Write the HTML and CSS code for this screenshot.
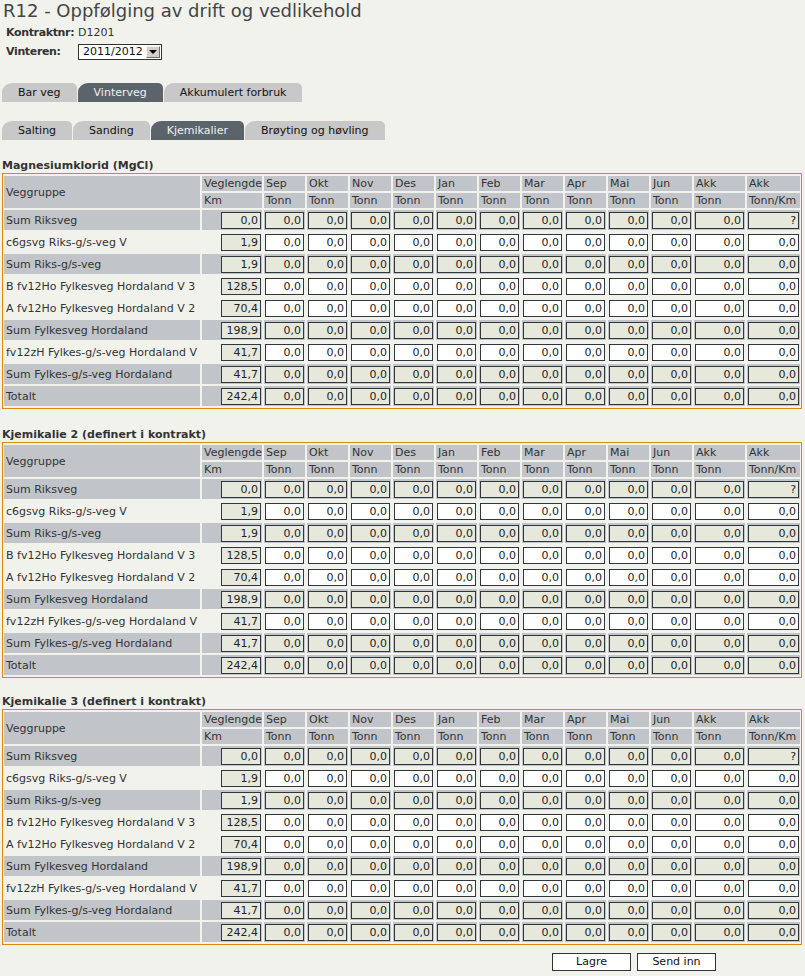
FILE: index.html
```html
<!DOCTYPE html>
<html lang="no">
<head>
<meta charset="utf-8">
<title>R12 - Oppfølging av drift og vedlikehold</title>
<link rel="stylesheet" href="styles.css">
</head>
<body>
<h1>R12 - Oppfølging av drift og vedlikehold</h1>
<div class="info">
  <span class="lbl">Kontraktnr:</span><span>D1201</span>
  <span class="lbl">Vinteren:</span>
  <div class="select"><span class="val">2011/2012</span><span class="arrow"><span class="tri"></span></span></div>
</div>

<div class="tabs tabs1">
  <span class="tab">Bar veg</span>
  <span class="tab active">Vinterveg</span>
  <span class="tab">Akkumulert forbruk</span>
</div>
<div class="tabs tabs2">
  <span class="tab">Salting</span>
  <span class="tab">Sanding</span>
  <span class="tab active">Kjemikalier</span>
  <span class="tab">Brøyting og høvling</span>
</div>

<h2 class="sect">Magnesiumklorid (MgCl)</h2>
<div class="wrap">
<table class="grid">
<colgroup><col class="c-name"><col class="c-km"><col class="c-m"><col class="c-m"><col class="c-m"><col class="c-m"><col class="c-m"><col class="c-m"><col class="c-m"><col class="c-m"><col class="c-m"><col class="c-m"><col class="c-akk"><col class="c-akk2"></colgroup>
<thead>
<tr><th rowspan="2" class="vg">Veggruppe</th><th>Veglengde</th><th>Sep</th><th>Okt</th><th>Nov</th><th>Des</th><th>Jan</th><th>Feb</th><th>Mar</th><th>Apr</th><th>Mai</th><th>Jun</th><th>Akk</th><th>Akk</th></tr>
<tr><th>Km</th><th>Tonn</th><th>Tonn</th><th>Tonn</th><th>Tonn</th><th>Tonn</th><th>Tonn</th><th>Tonn</th><th>Tonn</th><th>Tonn</th><th>Tonn</th><th>Tonn</th><th>Tonn/Km</th></tr>
</thead>
<tbody>
<tr class="sum"><td class="nm">Sum Riksveg</td><td><span class="box ro km">0,0</span></td><td><span class="box ro">0,0</span></td><td><span class="box ro">0,0</span></td><td><span class="box ro">0,0</span></td><td><span class="box ro">0,0</span></td><td><span class="box ro">0,0</span></td><td><span class="box ro">0,0</span></td><td><span class="box ro">0,0</span></td><td><span class="box ro">0,0</span></td><td><span class="box ro">0,0</span></td><td><span class="box ro">0,0</span></td><td><span class="box ro">0,0</span></td><td><span class="box ro">?</span></td></tr>
<tr><td class="nm">c6gsvg Riks-g/s-veg V</td><td><span class="box ro km">1,9</span></td><td><span class="box">0,0</span></td><td><span class="box">0,0</span></td><td><span class="box">0,0</span></td><td><span class="box">0,0</span></td><td><span class="box">0,0</span></td><td><span class="box">0,0</span></td><td><span class="box">0,0</span></td><td><span class="box">0,0</span></td><td><span class="box">0,0</span></td><td><span class="box">0,0</span></td><td><span class="box">0,0</span></td><td><span class="box">0,0</span></td></tr>
<tr class="sum"><td class="nm">Sum Riks-g/s-veg</td><td><span class="box ro km">1,9</span></td><td><span class="box ro">0,0</span></td><td><span class="box ro">0,0</span></td><td><span class="box ro">0,0</span></td><td><span class="box ro">0,0</span></td><td><span class="box ro">0,0</span></td><td><span class="box ro">0,0</span></td><td><span class="box ro">0,0</span></td><td><span class="box ro">0,0</span></td><td><span class="box ro">0,0</span></td><td><span class="box ro">0,0</span></td><td><span class="box ro">0,0</span></td><td><span class="box ro">0,0</span></td></tr>
<tr><td class="nm">B fv12Ho Fylkesveg Hordaland V 3</td><td><span class="box ro km">128,5</span></td><td><span class="box">0,0</span></td><td><span class="box">0,0</span></td><td><span class="box">0,0</span></td><td><span class="box">0,0</span></td><td><span class="box">0,0</span></td><td><span class="box">0,0</span></td><td><span class="box">0,0</span></td><td><span class="box">0,0</span></td><td><span class="box">0,0</span></td><td><span class="box">0,0</span></td><td><span class="box">0,0</span></td><td><span class="box">0,0</span></td></tr>
<tr><td class="nm">A fv12Ho Fylkesveg Hordaland V 2</td><td><span class="box ro km">70,4</span></td><td><span class="box">0,0</span></td><td><span class="box">0,0</span></td><td><span class="box">0,0</span></td><td><span class="box">0,0</span></td><td><span class="box">0,0</span></td><td><span class="box">0,0</span></td><td><span class="box">0,0</span></td><td><span class="box">0,0</span></td><td><span class="box">0,0</span></td><td><span class="box">0,0</span></td><td><span class="box">0,0</span></td><td><span class="box">0,0</span></td></tr>
<tr class="sum"><td class="nm">Sum Fylkesveg Hordaland</td><td><span class="box ro km">198,9</span></td><td><span class="box ro">0,0</span></td><td><span class="box ro">0,0</span></td><td><span class="box ro">0,0</span></td><td><span class="box ro">0,0</span></td><td><span class="box ro">0,0</span></td><td><span class="box ro">0,0</span></td><td><span class="box ro">0,0</span></td><td><span class="box ro">0,0</span></td><td><span class="box ro">0,0</span></td><td><span class="box ro">0,0</span></td><td><span class="box ro">0,0</span></td><td><span class="box ro">0,0</span></td></tr>
<tr><td class="nm">fv12zH Fylkes-g/s-veg Hordaland V</td><td><span class="box ro km">41,7</span></td><td><span class="box">0,0</span></td><td><span class="box">0,0</span></td><td><span class="box">0,0</span></td><td><span class="box">0,0</span></td><td><span class="box">0,0</span></td><td><span class="box">0,0</span></td><td><span class="box">0,0</span></td><td><span class="box">0,0</span></td><td><span class="box">0,0</span></td><td><span class="box">0,0</span></td><td><span class="box">0,0</span></td><td><span class="box">0,0</span></td></tr>
<tr class="sum"><td class="nm">Sum Fylkes-g/s-veg Hordaland</td><td><span class="box ro km">41,7</span></td><td><span class="box ro">0,0</span></td><td><span class="box ro">0,0</span></td><td><span class="box ro">0,0</span></td><td><span class="box ro">0,0</span></td><td><span class="box ro">0,0</span></td><td><span class="box ro">0,0</span></td><td><span class="box ro">0,0</span></td><td><span class="box ro">0,0</span></td><td><span class="box ro">0,0</span></td><td><span class="box ro">0,0</span></td><td><span class="box ro">0,0</span></td><td><span class="box ro">0,0</span></td></tr>
<tr class="sum"><td class="nm">Totalt</td><td><span class="box ro km">242,4</span></td><td><span class="box ro">0,0</span></td><td><span class="box ro">0,0</span></td><td><span class="box ro">0,0</span></td><td><span class="box ro">0,0</span></td><td><span class="box ro">0,0</span></td><td><span class="box ro">0,0</span></td><td><span class="box ro">0,0</span></td><td><span class="box ro">0,0</span></td><td><span class="box ro">0,0</span></td><td><span class="box ro">0,0</span></td><td><span class="box ro">0,0</span></td><td><span class="box ro">0,0</span></td></tr>
</tbody>
</table>
</div>

<h2 class="sect">Kjemikalie 2 (definert i kontrakt)</h2>
<div class="wrap">
<table class="grid">
<colgroup><col class="c-name"><col class="c-km"><col class="c-m"><col class="c-m"><col class="c-m"><col class="c-m"><col class="c-m"><col class="c-m"><col class="c-m"><col class="c-m"><col class="c-m"><col class="c-m"><col class="c-akk"><col class="c-akk2"></colgroup>
<thead>
<tr><th rowspan="2" class="vg">Veggruppe</th><th>Veglengde</th><th>Sep</th><th>Okt</th><th>Nov</th><th>Des</th><th>Jan</th><th>Feb</th><th>Mar</th><th>Apr</th><th>Mai</th><th>Jun</th><th>Akk</th><th>Akk</th></tr>
<tr><th>Km</th><th>Tonn</th><th>Tonn</th><th>Tonn</th><th>Tonn</th><th>Tonn</th><th>Tonn</th><th>Tonn</th><th>Tonn</th><th>Tonn</th><th>Tonn</th><th>Tonn</th><th>Tonn/Km</th></tr>
</thead>
<tbody>
<tr class="sum"><td class="nm">Sum Riksveg</td><td><span class="box ro km">0,0</span></td><td><span class="box ro">0,0</span></td><td><span class="box ro">0,0</span></td><td><span class="box ro">0,0</span></td><td><span class="box ro">0,0</span></td><td><span class="box ro">0,0</span></td><td><span class="box ro">0,0</span></td><td><span class="box ro">0,0</span></td><td><span class="box ro">0,0</span></td><td><span class="box ro">0,0</span></td><td><span class="box ro">0,0</span></td><td><span class="box ro">0,0</span></td><td><span class="box ro">?</span></td></tr>
<tr><td class="nm">c6gsvg Riks-g/s-veg V</td><td><span class="box ro km">1,9</span></td><td><span class="box">0,0</span></td><td><span class="box">0,0</span></td><td><span class="box">0,0</span></td><td><span class="box">0,0</span></td><td><span class="box">0,0</span></td><td><span class="box">0,0</span></td><td><span class="box">0,0</span></td><td><span class="box">0,0</span></td><td><span class="box">0,0</span></td><td><span class="box">0,0</span></td><td><span class="box">0,0</span></td><td><span class="box">0,0</span></td></tr>
<tr class="sum"><td class="nm">Sum Riks-g/s-veg</td><td><span class="box ro km">1,9</span></td><td><span class="box ro">0,0</span></td><td><span class="box ro">0,0</span></td><td><span class="box ro">0,0</span></td><td><span class="box ro">0,0</span></td><td><span class="box ro">0,0</span></td><td><span class="box ro">0,0</span></td><td><span class="box ro">0,0</span></td><td><span class="box ro">0,0</span></td><td><span class="box ro">0,0</span></td><td><span class="box ro">0,0</span></td><td><span class="box ro">0,0</span></td><td><span class="box ro">0,0</span></td></tr>
<tr><td class="nm">B fv12Ho Fylkesveg Hordaland V 3</td><td><span class="box ro km">128,5</span></td><td><span class="box">0,0</span></td><td><span class="box">0,0</span></td><td><span class="box">0,0</span></td><td><span class="box">0,0</span></td><td><span class="box">0,0</span></td><td><span class="box">0,0</span></td><td><span class="box">0,0</span></td><td><span class="box">0,0</span></td><td><span class="box">0,0</span></td><td><span class="box">0,0</span></td><td><span class="box">0,0</span></td><td><span class="box">0,0</span></td></tr>
<tr><td class="nm">A fv12Ho Fylkesveg Hordaland V 2</td><td><span class="box ro km">70,4</span></td><td><span class="box">0,0</span></td><td><span class="box">0,0</span></td><td><span class="box">0,0</span></td><td><span class="box">0,0</span></td><td><span class="box">0,0</span></td><td><span class="box">0,0</span></td><td><span class="box">0,0</span></td><td><span class="box">0,0</span></td><td><span class="box">0,0</span></td><td><span class="box">0,0</span></td><td><span class="box">0,0</span></td><td><span class="box">0,0</span></td></tr>
<tr class="sum"><td class="nm">Sum Fylkesveg Hordaland</td><td><span class="box ro km">198,9</span></td><td><span class="box ro">0,0</span></td><td><span class="box ro">0,0</span></td><td><span class="box ro">0,0</span></td><td><span class="box ro">0,0</span></td><td><span class="box ro">0,0</span></td><td><span class="box ro">0,0</span></td><td><span class="box ro">0,0</span></td><td><span class="box ro">0,0</span></td><td><span class="box ro">0,0</span></td><td><span class="box ro">0,0</span></td><td><span class="box ro">0,0</span></td><td><span class="box ro">0,0</span></td></tr>
<tr><td class="nm">fv12zH Fylkes-g/s-veg Hordaland V</td><td><span class="box ro km">41,7</span></td><td><span class="box">0,0</span></td><td><span class="box">0,0</span></td><td><span class="box">0,0</span></td><td><span class="box">0,0</span></td><td><span class="box">0,0</span></td><td><span class="box">0,0</span></td><td><span class="box">0,0</span></td><td><span class="box">0,0</span></td><td><span class="box">0,0</span></td><td><span class="box">0,0</span></td><td><span class="box">0,0</span></td><td><span class="box">0,0</span></td></tr>
<tr class="sum"><td class="nm">Sum Fylkes-g/s-veg Hordaland</td><td><span class="box ro km">41,7</span></td><td><span class="box ro">0,0</span></td><td><span class="box ro">0,0</span></td><td><span class="box ro">0,0</span></td><td><span class="box ro">0,0</span></td><td><span class="box ro">0,0</span></td><td><span class="box ro">0,0</span></td><td><span class="box ro">0,0</span></td><td><span class="box ro">0,0</span></td><td><span class="box ro">0,0</span></td><td><span class="box ro">0,0</span></td><td><span class="box ro">0,0</span></td><td><span class="box ro">0,0</span></td></tr>
<tr class="sum"><td class="nm">Totalt</td><td><span class="box ro km">242,4</span></td><td><span class="box ro">0,0</span></td><td><span class="box ro">0,0</span></td><td><span class="box ro">0,0</span></td><td><span class="box ro">0,0</span></td><td><span class="box ro">0,0</span></td><td><span class="box ro">0,0</span></td><td><span class="box ro">0,0</span></td><td><span class="box ro">0,0</span></td><td><span class="box ro">0,0</span></td><td><span class="box ro">0,0</span></td><td><span class="box ro">0,0</span></td><td><span class="box ro">0,0</span></td></tr>
</tbody>
</table>
</div>

<h2 class="sect last">Kjemikalie 3 (definert i kontrakt)</h2>
<div class="wrap">
<table class="grid">
<colgroup><col class="c-name"><col class="c-km"><col class="c-m"><col class="c-m"><col class="c-m"><col class="c-m"><col class="c-m"><col class="c-m"><col class="c-m"><col class="c-m"><col class="c-m"><col class="c-m"><col class="c-akk"><col class="c-akk2"></colgroup>
<thead>
<tr><th rowspan="2" class="vg">Veggruppe</th><th>Veglengde</th><th>Sep</th><th>Okt</th><th>Nov</th><th>Des</th><th>Jan</th><th>Feb</th><th>Mar</th><th>Apr</th><th>Mai</th><th>Jun</th><th>Akk</th><th>Akk</th></tr>
<tr><th>Km</th><th>Tonn</th><th>Tonn</th><th>Tonn</th><th>Tonn</th><th>Tonn</th><th>Tonn</th><th>Tonn</th><th>Tonn</th><th>Tonn</th><th>Tonn</th><th>Tonn</th><th>Tonn/Km</th></tr>
</thead>
<tbody>
<tr class="sum"><td class="nm">Sum Riksveg</td><td><span class="box ro km">0,0</span></td><td><span class="box ro">0,0</span></td><td><span class="box ro">0,0</span></td><td><span class="box ro">0,0</span></td><td><span class="box ro">0,0</span></td><td><span class="box ro">0,0</span></td><td><span class="box ro">0,0</span></td><td><span class="box ro">0,0</span></td><td><span class="box ro">0,0</span></td><td><span class="box ro">0,0</span></td><td><span class="box ro">0,0</span></td><td><span class="box ro">0,0</span></td><td><span class="box ro">?</span></td></tr>
<tr><td class="nm">c6gsvg Riks-g/s-veg V</td><td><span class="box ro km">1,9</span></td><td><span class="box">0,0</span></td><td><span class="box">0,0</span></td><td><span class="box">0,0</span></td><td><span class="box">0,0</span></td><td><span class="box">0,0</span></td><td><span class="box">0,0</span></td><td><span class="box">0,0</span></td><td><span class="box">0,0</span></td><td><span class="box">0,0</span></td><td><span class="box">0,0</span></td><td><span class="box">0,0</span></td><td><span class="box">0,0</span></td></tr>
<tr class="sum"><td class="nm">Sum Riks-g/s-veg</td><td><span class="box ro km">1,9</span></td><td><span class="box ro">0,0</span></td><td><span class="box ro">0,0</span></td><td><span class="box ro">0,0</span></td><td><span class="box ro">0,0</span></td><td><span class="box ro">0,0</span></td><td><span class="box ro">0,0</span></td><td><span class="box ro">0,0</span></td><td><span class="box ro">0,0</span></td><td><span class="box ro">0,0</span></td><td><span class="box ro">0,0</span></td><td><span class="box ro">0,0</span></td><td><span class="box ro">0,0</span></td></tr>
<tr><td class="nm">B fv12Ho Fylkesveg Hordaland V 3</td><td><span class="box ro km">128,5</span></td><td><span class="box">0,0</span></td><td><span class="box">0,0</span></td><td><span class="box">0,0</span></td><td><span class="box">0,0</span></td><td><span class="box">0,0</span></td><td><span class="box">0,0</span></td><td><span class="box">0,0</span></td><td><span class="box">0,0</span></td><td><span class="box">0,0</span></td><td><span class="box">0,0</span></td><td><span class="box">0,0</span></td><td><span class="box">0,0</span></td></tr>
<tr><td class="nm">A fv12Ho Fylkesveg Hordaland V 2</td><td><span class="box ro km">70,4</span></td><td><span class="box">0,0</span></td><td><span class="box">0,0</span></td><td><span class="box">0,0</span></td><td><span class="box">0,0</span></td><td><span class="box">0,0</span></td><td><span class="box">0,0</span></td><td><span class="box">0,0</span></td><td><span class="box">0,0</span></td><td><span class="box">0,0</span></td><td><span class="box">0,0</span></td><td><span class="box">0,0</span></td><td><span class="box">0,0</span></td></tr>
<tr class="sum"><td class="nm">Sum Fylkesveg Hordaland</td><td><span class="box ro km">198,9</span></td><td><span class="box ro">0,0</span></td><td><span class="box ro">0,0</span></td><td><span class="box ro">0,0</span></td><td><span class="box ro">0,0</span></td><td><span class="box ro">0,0</span></td><td><span class="box ro">0,0</span></td><td><span class="box ro">0,0</span></td><td><span class="box ro">0,0</span></td><td><span class="box ro">0,0</span></td><td><span class="box ro">0,0</span></td><td><span class="box ro">0,0</span></td><td><span class="box ro">0,0</span></td></tr>
<tr><td class="nm">fv12zH Fylkes-g/s-veg Hordaland V</td><td><span class="box ro km">41,7</span></td><td><span class="box">0,0</span></td><td><span class="box">0,0</span></td><td><span class="box">0,0</span></td><td><span class="box">0,0</span></td><td><span class="box">0,0</span></td><td><span class="box">0,0</span></td><td><span class="box">0,0</span></td><td><span class="box">0,0</span></td><td><span class="box">0,0</span></td><td><span class="box">0,0</span></td><td><span class="box">0,0</span></td><td><span class="box">0,0</span></td></tr>
<tr class="sum"><td class="nm">Sum Fylkes-g/s-veg Hordaland</td><td><span class="box ro km">41,7</span></td><td><span class="box ro">0,0</span></td><td><span class="box ro">0,0</span></td><td><span class="box ro">0,0</span></td><td><span class="box ro">0,0</span></td><td><span class="box ro">0,0</span></td><td><span class="box ro">0,0</span></td><td><span class="box ro">0,0</span></td><td><span class="box ro">0,0</span></td><td><span class="box ro">0,0</span></td><td><span class="box ro">0,0</span></td><td><span class="box ro">0,0</span></td><td><span class="box ro">0,0</span></td></tr>
<tr class="sum"><td class="nm">Totalt</td><td><span class="box ro km">242,4</span></td><td><span class="box ro">0,0</span></td><td><span class="box ro">0,0</span></td><td><span class="box ro">0,0</span></td><td><span class="box ro">0,0</span></td><td><span class="box ro">0,0</span></td><td><span class="box ro">0,0</span></td><td><span class="box ro">0,0</span></td><td><span class="box ro">0,0</span></td><td><span class="box ro">0,0</span></td><td><span class="box ro">0,0</span></td><td><span class="box ro">0,0</span></td><td><span class="box ro">0,0</span></td></tr>
</tbody>
</table>
</div>

<div class="actions">
  <button class="btn" type="button">Lagre</button>
  <button class="btn" type="button">Send inn</button>
</div>
</body>
</html>
```
FILE: styles.css
```css
html, body {
  background: #f2f2ed;
}
body {
  margin: 0;
  padding: 0 2px;
  font-family: "DejaVu Sans", Verdana, sans-serif;
  font-size: 11px;
  color: #333;
}
h1 {
  margin: 0;
  padding-left: 1px;
  font-size: 18px;
  font-weight: normal;
  line-height: 22px;
  color: #444;
}
.info {
  display: grid;
  grid-template-columns: 72px auto;
  row-gap: 4px;
  align-items: center;
  justify-items: start;
  margin: 4px 0 0 4px;
  line-height: 14px;
}
.info .lbl {
  font-weight: bold;
  letter-spacing: -0.35px;
}
.select {
  display: flex;
  align-items: center;
  box-sizing: border-box;
  width: 84px;
  height: 16px;
  border: 1px solid #333;
  background: #fff;
  color: #111;
}
.select .val {
  flex: 1;
  padding-left: 4px;
  line-height: 14px;
}
.select .arrow {
  display: flex;
  align-items: center;
  justify-content: center;
  box-sizing: border-box;
  width: 14px;
  height: 12px;
  margin-right: 1px;
  background: #d4d0c8;
  border: 1px solid;
  border-color: #f4f4f0 #6e6e6e #6e6e6e #f4f4f0;
}
.select .tri {
  width: 0;
  height: 0;
  border-left: 4px solid transparent;
  border-right: 4px solid transparent;
  border-top: 4px solid #000;
}
.tabs {
  display: flex;
  gap: 1px;
}
.tabs1 {
  margin-top: 23px;
}
.tabs2 {
  margin-top: 19px;
}
.tab {
  display: block;
  height: 19px;
  line-height: 20px;
  padding: 0 16px;
  background: #c8c8c8;
  color: #111;
  border-radius: 10px 5px 0 0 / 9px 5px 0 0;
}
.tab.active {
  background: #5b636b;
  color: #f0f0f0;
}
.sect {
  margin: 18px 0 0 0;
  font-size: 11px;
  font-weight: bold;
  line-height: 15px;
  color: #333;
}
.sect.last {
  margin-top: 16px;
}
.wrap {
  box-sizing: border-box;
  width: 800px;
  border: 1px solid #e3860e;
}
.grid {
  table-layout: fixed;
  width: 800px;
  margin: 0 -1px;
  border-collapse: separate;
  border-spacing: 2px;
}
.c-name { width: 196px; }
.c-km { width: 60px; }
.c-m { width: 41px; }
.c-akk { width: 51px; }
.c-akk2 { width: 53px; }
.grid th {
  height: 15px;
  padding: 0 0 0 2px;
  background: #c1c5c9;
  font-weight: normal;
  text-align: left;
  line-height: 15px;
  white-space: nowrap;
  overflow: hidden;
  color: #333;
}
.grid th.vg {
  vertical-align: middle;
}
.grid td {
  height: 20px;
  padding: 0;
  vertical-align: middle;
}
.grid td.nm {
  padding-left: 2px;
  white-space: nowrap;
  overflow: hidden;
}
.grid tr.sum td {
  background: #c1c5c9;
}
.box {
  display: block;
  box-sizing: border-box;
  width: calc(100% - 2px);
  height: 17px;
  margin: 0 1px 0 auto;
  padding-right: 2px;
  border: 1px solid #30363c;
  background: #fff;
  text-align: right;
  line-height: 15px;
  color: #222;
}
.box.km {
  width: 40px;
}
.box.ro {
  background: #e7e8dc;
}
.actions {
  display: flex;
  gap: 6px;
  margin-top: 8px;
  padding-left: 550px;
}
.btn {
  box-sizing: border-box;
  width: 79px;
  height: 18px;
  padding: 0;
  border: 1px solid #333;
  background: #fff;
  font-family: "DejaVu Sans", Verdana, sans-serif;
  font-size: 11px;
  color: #111;
  line-height: 16px;
}
```
